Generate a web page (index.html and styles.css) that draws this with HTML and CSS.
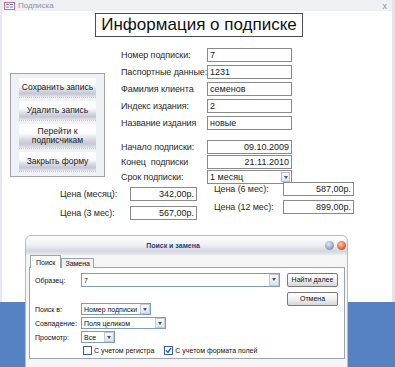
FILE: index.html
```html
<!DOCTYPE html>
<html lang="ru">
<head>
    <meta charset="UTF-8">
    <title>Подписка</title>
    <link rel="stylesheet" href="styles.css">
</head>
<body>
    <div class="desktop">
        <div class="window">
            <div class="titlebar">
                <svg class="appIcon" width="11" height="8" viewBox="0 0 11 8">
                    <rect x="0.5" y="0.5" width="10" height="7" fill="#fff" stroke="#cc6f8c"/>
                    <rect x="2" y="2" width="3" height="1" fill="#5a7fc0"/>
                    <rect x="6" y="2" width="3" height="1" fill="#5a7fc0"/>
                    <rect x="2" y="4.5" width="3" height="1" fill="#5a7fc0"/>
                    <rect x="6" y="4.5" width="3" height="1" fill="#5a7fc0"/>
                </svg>
                <span>Подписка</span>
                <span class="closeX">x</span>
            </div>

            <div class="heading">Информация о подписке</div>

            <div class="main">
                <div class="side">
                    <div class="sideBtn">Сохранить запись</div>
                    <div class="sideBtn">Удалить запись</div>
                    <div class="sideBtn tall">Перейти к<br>подписчикам</div>
                    <div class="sideBtn">Закрыть форму</div>
                </div>

                <div class="fields">
                    <div class="group">
                        <label>Номер подписки:</label>
                        <div class="field">7</div>
                        <label>Паспортные данные:</label>
                        <div class="field">1231</div>
                        <label>Фамилия клиента</label>
                        <div class="field">семенов</div>
                        <label>Индекс издания:</label>
                        <div class="field">2</div>
                        <label>Название издания</label>
                        <div class="field">новые</div>
                    </div>
                    <div class="group dates">
                        <label>Начало подписки:</label>
                        <div class="field right">09.10.2009</div>
                        <label>Конец  подписки</label>
                        <div class="field right">21.11.2010</div>
                        <label>Срок подписки:</label>
                        <div class="field combo"><span>1 месяц</span><span class="arrow"></span></div>
                    </div>
                </div>
            </div>

            <div class="prices">
                <div class="priceGroup">
                    <label>Цена (месяц):</label>
                    <div class="field right">342,00р.</div>
                    <label>Цена (3 мес):</label>
                    <div class="field right">567,00р.</div>
                </div>
                <div class="priceGroup second">
                    <label>Цена (6 мес):</label>
                    <div class="field right">587,00р.</div>
                    <label>Цена (12 мес):</label>
                    <div class="field right">899,00р.</div>
                </div>
            </div>
        </div>

        <div class="dialog">
            <div class="dialogTitle">
                <span class="dialogName">Поиск и замена</span>
                <span class="dot help"></span>
                <span class="dot close"></span>
            </div>
            <div class="dialogBody">
                <div class="tabs">
                    <div class="tab active">Поиск</div>
                    <div class="tab">Замена</div>
                </div>
                <div class="panel">
                    <div class="panelLeft">
                        <div class="row">
                            <span class="dlgLabel">Образец:</span>
                            <div class="box wide"><span>7</span><span class="arrow"></span></div>
                        </div>
                        <div class="row opt first">
                            <span class="dlgLabel">Поиск в:</span>
                            <div class="box w70"><span>Номер подписки</span><span class="arrow"></span></div>
                        </div>
                        <div class="row opt">
                            <span class="dlgLabel">Совпадение:</span>
                            <div class="box w85"><span>Поля целиком</span><span class="arrow"></span></div>
                        </div>
                        <div class="row opt">
                            <span class="dlgLabel">Просмотр:</span>
                            <div class="box w34"><span>Все</span><span class="arrow"></span></div>
                        </div>
                        <div class="row checks">
                            <span class="check"></span><span class="checkText">С учетом регистра</span>
                            <span class="check on">
                                <svg width="7" height="7" viewBox="0 0 7 7"><path d="M1 3.5 L3 5.5 L6 1" fill="none" stroke="#2a5db0" stroke-width="1.4"/></svg>
                            </span><span class="checkText">С учетом формата полей</span>
                        </div>
                    </div>
                    <div class="panelRight">
                        <div class="dlgBtn">Найти далее</div>
                        <div class="dlgBtn">Отмена</div>
                    </div>
                </div>
            </div>
        </div>
    </div>
</body>
</html>
```

FILE: styles.css
```css
body{
    margin: 0;
    font-family: "Liberation Sans", Arial, sans-serif;
}
.desktop{
    position: relative;
    width: 395px;
    height: 367px;
    overflow: hidden;
    background: #5682c4;
}
.window{
    width: 395px;
    height: 302px;
    box-sizing: border-box;
    background: #fff;
    border-left: 2px solid #e6e9ee;
    border-right: 3px solid #e1e5eb;
    color: #2b2b2b;
    font-size: 9px;
}
.titlebar{
    height: 11px;
    display: flex;
    align-items: center;
    gap: 3px;
    padding-left: 2px;
    background: #eef0f4;
    color: #8d929b;
    font-size: 8px;
}
.closeX{
    margin-left: auto;
    margin-right: 5px;
    font-size: 9px;
}
.heading{
    margin: 2px 0 0 93px;
    width: 208px;
    height: 24px;
    box-sizing: border-box;
    border: 1px solid #4d4d4d;
    font-size: 17px;
    line-height: 22px;
    text-align: center;
    color: #111;
}
.main{
    display: flex;
    margin-top: 9px;
}
.side{
    margin: 27px 0 0 8px;
    width: 95px;
    height: 104px;
    box-sizing: border-box;
    border: 1px solid #a3a3a3;
    background: #eef1f6;
    padding: 4px 8px;
    display: flex;
    flex-direction: column;
    gap: 3px;
}
.sideBtn{
    height: 19px;
    display: flex;
    align-items: center;
    justify-content: center;
    text-align: center;
    font-size: 8.5px;
    line-height: 9px;
    color: #222;
    background: linear-gradient(#fff 0%, #fbfbfd 40%, #dcdce6 62%, #c6c6d4 82%, #e4e4ec 100%);
    border-bottom: 1px dotted #c9ccd6;
}
.sideBtn.tall{
    height: 24px;
}
.fields{
    margin-left: 16px;
}
.group{
    display: grid;
    grid-template-columns: 86px 85px;
    grid-auto-rows: 17px;
    align-items: center;
}
.group.dates{
    margin-top: 8px;
    grid-auto-rows: 15px;
}
label{
    white-space: pre;
    letter-spacing: -0.1px;
}
.field{
    height: 14px;
    box-sizing: border-box;
    border: 1px solid #8a8a8a;
    background: #fff;
    padding: 0 2px;
    line-height: 12px;
    color: #222;
}
.field.right{
    text-align: right;
}
.field.combo{
    display: flex;
    justify-content: space-between;
    padding-right: 1px;
}
.arrow{
    width: 9px;
    height: 10px;
    margin-top: 1px;
    box-sizing: border-box;
    border: 1px solid #b9bfc9;
    background: linear-gradient(#f7f8fa, #dfe3ea);
    position: relative;
}
.arrow::after{
    content: "";
    position: absolute;
    left: 1.5px;
    top: 3px;
    border-left: 2.5px solid transparent;
    border-right: 2.5px solid transparent;
    border-top: 3px solid #4a5670;
}
.prices{
    display: flex;
    align-items: flex-start;
}
.priceGroup{
    margin-left: 58px;
    display: grid;
    grid-template-columns: 70px 67px;
    grid-auto-rows: 19px;
    align-items: center;
}
.priceGroup.second{
    margin-left: 17px;
    margin-top: -4px;
    grid-template-columns: 69px 71px;
    grid-auto-rows: 18px;
}

/* search dialog */
.dialog{
    position: absolute;
    left: 25px;
    top: 235px;
    width: 323px;
    height: 140px;
    box-sizing: border-box;
    border: 1px solid #b5bac4;
    border-radius: 6px 6px 0 0;
    background: #f5f5f5;
    font-size: 7px;
    color: #111;
    white-space: nowrap;
}
.dialogTitle{
    height: 19px;
    display: flex;
    align-items: center;
    gap: 3px;
    padding-right: 1px;
    border-radius: 6px 6px 0 0;
    background: linear-gradient(#fdfdfd 0%, #f1f2f5 45%, #d3d6dd 80%, #e9ebef 100%);
}
.dialogName{
    flex: 1;
    padding-right: 2px;
    text-align: center;
    font-weight: bold;
    color: #22407c;
    font-size: 7px;
}
.dot{
    width: 9px;
    height: 9px;
    border-radius: 50%;
}
.dot.help{
    background: radial-gradient(circle at 40% 35%, #e3e8f3, #8898bd 70%, #6c7ea8);
}
.dot.close{
    background: radial-gradient(circle at 40% 35%, #ffd0b0, #e8582c 65%, #c43c18);
}
.dialogBody{
    padding: 0 3px 0 4px;
}
.tabs{
    display: flex;
    height: 13px;
    align-items: flex-end;
}
.tab{
    height: 10px;
    padding: 0 3px;
    box-sizing: border-box;
    border: 1px solid #9aa3b1;
    border-bottom: none;
    background: #eef0f3;
    line-height: 9px;
}
.tab.active{
    position: relative;
    z-index: 1;
    height: 13px;
    padding: 0 5px;
    background: #fff;
    line-height: 13px;
}
.panel{
    margin: -1px 0 0 -1px;
    width: 316px;
    height: 92px;
    box-sizing: border-box;
    border: 1px solid #9ea4ad;
    background: #fff;
    display: flex;
}
.panelLeft{
    width: 251px;
    padding-top: 5px;
}
.row{
    display: flex;
    align-items: center;
    height: 14px;
}
.row.opt{
    height: 12px;
    margin-bottom: 2px;
}
.row.opt.first{
    margin-top: 16px;
}
.dlgLabel{
    width: 51px;
    padding-left: 5px;
    box-sizing: border-box;
}
.box{
    height: 100%;
    box-sizing: border-box;
    border: 1px solid #7f9db9;
    display: flex;
    justify-content: space-between;
    align-items: center;
    padding: 0 0 0 2px;
    overflow: hidden;
}
.box .arrow{
    flex: none;
    height: 100%;
    margin: 0;
    width: 10px;
    border-color: #c3cbd9;
}
.box.wide{ width: 199px; }
.box.w70{ width: 70px; }
.box.w85{ width: 85px; }
.box.w34{ width: 34px; }
.row.checks{
    height: 10px;
    padding-left: 53px;
    margin-top: 2px;
}
.check{
    width: 9px;
    height: 9px;
    box-sizing: border-box;
    border: 1px solid #3a5f8f;
    background: #fff;
    display: flex;
    align-items: center;
    justify-content: center;
}
.checkText{
    margin: 0 10px 0 2px;
}
.panelRight{
    margin-left: 6px;
    padding-top: 5px;
    display: flex;
    flex-direction: column;
    gap: 5px;
}
.dlgBtn{
    width: 51px;
    height: 14px;
    box-sizing: border-box;
    border: 1px solid #7a7a7a;
    border-radius: 2px;
    background: linear-gradient(#ffffff, #f2f2f2 50%, #d6d6d6);
    text-align: center;
    line-height: 12px;
}
```
